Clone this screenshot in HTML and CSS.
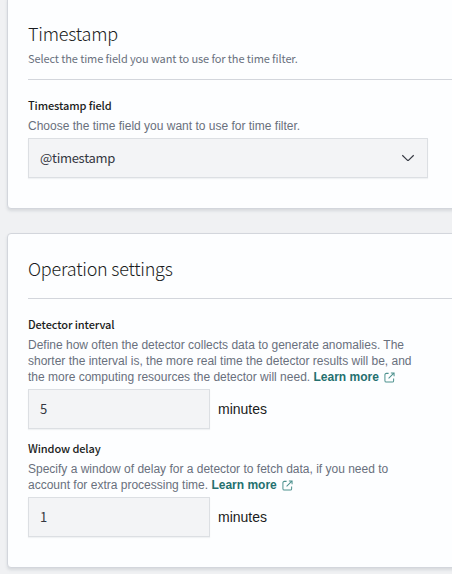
FILE: index.html
```html
<!DOCTYPE html>
<html lang="en">
<head>
<meta charset="utf-8">
<title>Detector settings</title>
<link rel="stylesheet" href="styles.css">
</head>
<body>
<main class="page">
  <section class="panel panel-timestamp">
    <h2 class="title">Timestamp</h2>
    <p class="subtitle">Select the time field you want to use for the time filter.</p>
    <hr class="rule">
    <h3 class="label">Timestamp field</h3>
    <p class="help">Choose the time field you want to use for time filter.</p>
    <div class="control select"><span>@timestamp</span>
      <svg class="chevron" width="16" height="16" viewBox="0 0 16 16"><path d="M2.300 5.300 7.300 10.100a1 1 0 0 0 1.400 0L13.700 5.300"/></svg>
    </div>
  </section>
  <section class="panel panel-operation">
    <h2 class="title title-long">Operation settings</h2>
    <hr class="rule">
    <h3 class="label">Detector interval</h3>
    <p class="help">Define how often the detector collects data to generate anomalies. The<br>shorter the interval is, the more real time the detector results will be, and<br>the more computing resources the detector will need. <a class="link">Learn more <svg class="popout" width="11" height="11" viewBox="0 0 12 12"><path d="M5 1.500H2.500a1.500 1.500 0 0 0-1.500 1.500v6.500A1.500 1.500 0 0 0 2.500 11H9a1.500 1.500 0 0 0 1.500-1.500V7M7.500 1H11v3.500M11 1 5 7"/></svg></a></p>
    <div class="field-row"><div class="control number">5</div><span class="unit">minutes</span></div>
    <h3 class="label label-next">Window delay</h3>
    <p class="help">Specify a window of delay for a detector to fetch data, if you need to<br>account for extra processing time. <a class="link">Learn more <svg class="popout" width="11" height="11" viewBox="0 0 12 12"><path d="M5 1.500H2.500a1.500 1.500 0 0 0-1.500 1.500v6.500A1.500 1.500 0 0 0 2.500 11H9a1.500 1.500 0 0 0 1.500-1.500V7M7.500 1H11v3.500M11 1 5 7"/></svg></a></p>
    <div class="field-row"><div class="control number">1</div><span class="unit">minutes</span></div>
  </section>
</main>
</body>
</html>
```
FILE: styles.css
```css
* { box-sizing: border-box; margin: 0; padding: 0; }
body {
  width: 452px;
  height: 574px;
  overflow: hidden;
  background: #f0f1f3;
  color: #1a1c21;
  font-family: "Noto Sans CJK JP", "Open Sans", sans-serif;
}
.page {
  height: 574px;
  padding-left: 7px;
  display: flex;
  flex-direction: column;
  gap: 24px;
}
.panel {
  width: 460px;
  padding-left: 20px;
  background: #fdfeff;
  border: 1px solid #d3d6dc;
  border-radius: 4px;
  box-shadow: 0 2px 3px rgba(90, 100, 115, .16);
}
.panel-timestamp { height: 213px; margin-top: -4px; padding-top: 20px; }
.panel-operation { height: 335px; padding-top: 18px; }
.title {
  height: 32px;
  line-height: 32px;
  font-size: 18px;
  font-weight: 300;
  letter-spacing: -.2px;
}
.title-long { letter-spacing: -.23px; }
.subtitle {
  height: 18px;
  line-height: 18px;
  font-size: 11px;
  letter-spacing: -.11px;
  color: #69707d;
}
.rule { border: 0; height: 1px; background: #d3d6dc; }
.panel-timestamp .rule { margin: 12px 0 16px; }
.panel-operation .rule { margin: 14px 0 16px; }
.label {
  height: 18px;
  line-height: 18px;
  font-size: 11px;
  font-weight: 500;
  letter-spacing: -.1px;
}
.label-next { margin-top: 10px; }
.help {
  padding-top: 4px;
  line-height: 16px;
  font-family: "Liberation Sans", Arial, sans-serif;
  font-size: 12px;
  color: #69707d;
  white-space: nowrap;
}
.link { color: #24706f; font-weight: 700; }
.popout {
  margin-left: 2px;
  vertical-align: -2px;
  fill: none;
  stroke: #4d918e;
  stroke-width: 1.1;
}
.control {
  display: flex;
  align-items: center;
  height: 40px;
  padding: 0 11px 2px;
  background: #f3f4f6;
  border: 1px solid #dcdfe3;
  box-shadow: 0 1px 1px rgba(90, 100, 115, .08);
  font-size: 13px;
  letter-spacing: -.28px;
  color: #343741;
}
.select { width: 400px; justify-content: space-between; margin-top: 4px; }
.number { width: 182px; }
.chevron { margin-top: 2px; fill: none; stroke: #343741; stroke-width: 1.2; }
.field-row { display: flex; align-items: center; gap: 8px; margin-top: 4px; }
.unit {
  font-family: "Liberation Sans", Arial, sans-serif;
  font-size: 14px;
}
```
